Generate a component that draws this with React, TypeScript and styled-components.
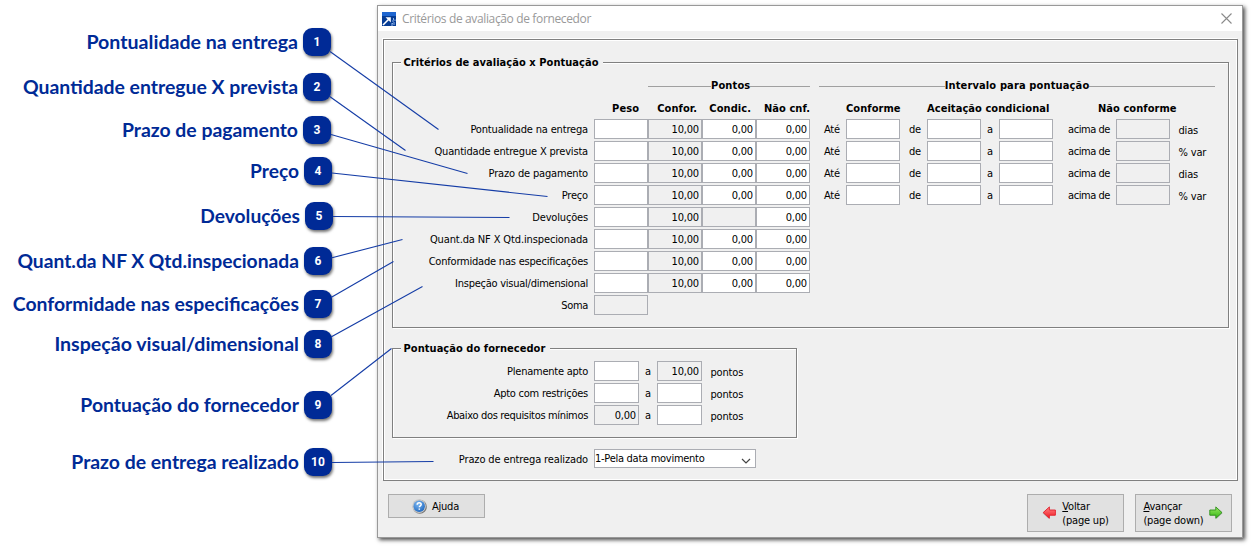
import React from 'react';
import styled, { createGlobalStyle } from 'styled-components';

const GlobalStyle = createGlobalStyle`
  * { box-sizing: border-box; }
  body { margin: 0; background: #fff; }
`;

const Page = styled.main`
  position: relative;
  display: flex;
  align-items: flex-start;
  width: 1256px;
  height: 549px;
  overflow: hidden;
  font: 11px/14px 'DejaVu Sans Condensed', 'DejaVu Sans', sans-serif;
  letter-spacing: -0.17px;
  color: #000;
`;

const CalloutList = styled.ol`
  list-style: none;
  margin: 0;
  padding: 28px 0 0;
  width: 377px;
  flex: none;
`;

const Callout = styled.li<{ $after: number; $inset: number }>`
  display: flex;
  justify-content: flex-end;
  align-items: center;
  gap: 5px;
  height: 28px;
  margin-bottom: ${(p) => p.$after}px;
  padding-right: ${(p) => p.$inset}px;
  white-space: nowrap;
`;

const CalloutText = styled.span<{ $size?: number }>`
  font: 700 ${(p) => p.$size ?? 19.4}px/28px Lato, sans-serif;
  letter-spacing: 0;
  color: #002a96;
`;

const Badge = styled.span`
  display: flex;
  align-items: center;
  justify-content: center;
  width: 28px;
  height: 28px;
  border-radius: 9px;
  background: #002a96;
  box-shadow: 1px 2px 3px rgba(0, 0, 0, 0.55);
  color: #fff;
  font: 700 12px/28px Roboto, sans-serif;
  letter-spacing: 0;
`;

const Leaders = styled.svg`
  position: absolute;
  inset: 0;
  pointer-events: none;
`;

const Window = styled.section`
  display: flex;
  flex-direction: column;
  flex: none;
  width: 866px;
  height: 533px;
  margin-top: 5px;
  border: 1px solid #999;
  background: #f0f0f0;
  box-shadow: 2px 2px 4px rgba(0, 0, 0, 0.7);
`;

const TitleBar = styled.header`
  display: flex;
  align-items: center;
  gap: 6px;
  height: 25px;
  padding: 0 10px 0 4px;
  background: #fff;
`;

const Title = styled.h1`
  flex: 1;
  margin: 0;
  font: 400 12px/24px 'Open Sans', sans-serif;
  letter-spacing: -0.36px;
  color: #999;
`;

const Panel = styled.div`
  width: 855px;
  height: 442px;
  margin: 8px 0 0 5px;
  padding: 22px 0 0 8px;
  border: 1px solid #808080;
  box-shadow: inset 1px 1px 0 #fff, inset -1px -1px 0 #fff, -1px -1px 0 #fff;
`;

const GroupBox = styled.section<{ $w: number; $h: number; $top: number; $after?: number }>`
  position: relative;
  display: flex;
  width: ${(p) => p.$w}px;
  height: ${(p) => p.$h}px;
  margin-bottom: ${(p) => p.$after ?? 0}px;
  padding-top: ${(p) => p.$top}px;
  border: 1px solid #808080;
  box-shadow: inset 1px 1px 0 #fff, 1px 1px 0 #fff;
`;

const Legend = styled.h2<{ $w: number }>`
  position: absolute;
  top: -8px;
  left: 8px;
  width: ${(p) => p.$w}px;
  margin: 0;
  padding-left: 2.5px;
  background: #f0f0f0;
  font-size: 11px;
  font-weight: 700;
  line-height: 15px;
  letter-spacing: 0.05px;
  white-space: nowrap;
`;

const Column = styled.div<{ $gapLeft?: number }>`
  margin-left: ${(p) => p.$gapLeft ?? 0}px;
`;

const Rule = styled.div<{ $indent?: number; $lead?: number }>`
  display: flex;
  align-items: center;
  height: 14px;
  margin: 0 0 8px ${(p) => p.$indent ?? 0}px;
  font-weight: 700;
  line-height: 16px;
  letter-spacing: 0.14px;
  &::before, &::after {
    content: '';
    flex: 1;
    height: 1px;
    background: #a0a0a0;
  }
  &::before {
    flex: ${(p) => (p.$lead ? `0 0 ${p.$lead}px` : '1')};
  }
`;

const HeaderRow = styled.div<{ $cols: string }>`
  display: grid;
  grid-template-columns: ${(p) => p.$cols};
  height: 14px;
  margin-bottom: 4px;
  font-weight: 700;
  line-height: 16px;
  letter-spacing: 0.06px;
  white-space: nowrap;
`;

const HeaderCell = styled.span<{ $right?: number }>`
  text-align: ${(p) => (p.$right === undefined ? 'left' : 'right')};
  padding-right: ${(p) => p.$right ?? 0}px;
`;

const Row = styled.div<{ $cols: string }>`
  display: grid;
  grid-template-columns: ${(p) => p.$cols};
  align-items: center;
  height: 20px;
  margin-bottom: 2px;
`;

const Label = styled.span<{ $track?: number }>`
  padding: 2px 6px 0 0;
  text-align: right;
  white-space: nowrap;
  letter-spacing: ${(p) => p.$track ?? -0.17}px;
`;

const Unit = styled.span`
  padding: 4px 0 0 8.5px;
  white-space: nowrap;
`;

const Field = styled.span<{ $off?: boolean }>`
  height: 20px;
  padding-right: 2px;
  border: 1px solid #abadb3;
  background: ${(p) => (p.$off ? '#f0f0f0' : '#fff')};
  line-height: 20px;
  text-align: right;
`;

const SelectRow = styled.div`
  display: grid;
  grid-template-columns: 202px 162px;
  align-items: center;
  height: 19px;
  margin-top: 11px;
`;

const Select = styled.div`
  display: flex;
  justify-content: space-between;
  align-items: center;
  height: 19px;
  padding: 0 4px 0 0;
  border: 1px solid #abadb3;
  background: #fff;
  line-height: 17px;
  letter-spacing: -0.27px;
`;

const Chevron = styled.svg`
  margin-top: 5px;
`;

const Footer = styled.footer`
  display: flex;
  align-items: flex-start;
  gap: 11px;
  padding: 13px 10px 0;
`;

const Button = styled.button<{ $tall?: boolean; $push?: boolean }>`
  display: flex;
  align-items: center;
  justify-content: center;
  gap: 5px;
  width: 97px;
  height: ${(p) => (p.$tall ? 38 : 24)}px;
  margin-right: ${(p) => (p.$push ? 'auto' : '0')};
  padding: 0 ${(p) => (p.$push ? 2 : 0)}px 0 0;
  border: 1px solid #adadad;
  border-radius: 0;
  background: #e1e1e1;
  color: #000;
  font: inherit;
  letter-spacing: -0.2px;
  text-align: left;
  white-space: nowrap;
  u { text-underline-offset: 1px; }
`;

const ButtonText = styled.span`
  padding-top: 2px;
`;

const callouts = [
  { text: 'Pontualidade na entrega', after: 17, inset: 46, size: 19.6 },
  { text: 'Quantidade entregue X prevista', after: 15, inset: 46 },
  { text: 'Prazo de pagamento', after: 13, inset: 46 },
  { text: 'Preço', after: 17, inset: 45, size: 19.2 },
  { text: 'Devoluções', after: 17, inset: 44, size: 19.2 },
  { text: 'Quant.da NF X Qtd.inspecionada', after: 15, inset: 45, size: 19.25 },
  { text: 'Conformidade nas especificações', after: 12, inset: 45 },
  { text: 'Inspeção visual/dimensional', after: 33, inset: 45, size: 19.6 },
  { text: 'Pontuação do fornecedor', after: 29, inset: 45 },
  { text: 'Prazo de entrega realizado', after: 0, inset: 45 },
];

const leaders = [
  [330, 51.5, 438.5, 129.5],
  [329, 96, 405.5, 150.5],
  [331, 134.5, 467.5, 173.5],
  [332, 173, 547.5, 196.5],
  [333, 216.5, 509.5, 217.5],
  [331, 258, 402.5, 239.5],
  [331, 297.5, 393.5, 261.5],
  [331, 337, 422.5, 286.5],
  [331, 395.5, 391.5, 348.5],
  [332, 462.5, 433.5, 461.5],
];

const criteria: { label: string; track?: number; condic?: string }[] = [
  { label: 'Pontualidade na entrega' },
  { label: 'Quantidade entregue X prevista' },
  { label: 'Prazo de pagamento' },
  { label: 'Preço' },
  { label: 'Devoluções', condic: '' },
  { label: 'Quant.da NF X Qtd.inspecionada', track: -0.12 },
  { label: 'Conformidade nas especificações', track: -0.21 },
  { label: 'Inspeção visual/dimensional', track: -0.25 },
];

const POINT_COLS = '201px repeat(4, 54px)';
const RANGE_COLS = '27px 54px 27px 54px 18px 54px 63px 54px 45px';
const SCORE_COLS = '201px 45px 18px 45px 60px';

const AppIcon = () => (
  <svg width="14" height="14" viewBox="0 0 14 14">
    <rect width="14" height="14" fill="#073c94" />
    <rect width="14" height="4" fill="#1f66d0" />
    <path d="M1 13 7.5 6.5" stroke="#fff" strokeWidth="1.6" />
    <path d="M3.5 5.2h5.3v5.3z" fill="#fff" />
    <path d="M11.5 6v2M10 9h2M12 10v3M9.5 11.5h1.5M9 13h2M13 7.5v1.5" stroke="#8fb4ea" strokeWidth="1" />
  </svg>
);

const CloseIcon = () => (
  <svg width="11" height="11" viewBox="0 0 11 11">
    <path d="M.5.5l10 10M10.5.5l-10 10" stroke="#8a8a8a" strokeWidth="1.1" />
  </svg>
);

const HelpIcon = () => (
  <svg width="15" height="15" viewBox="0 0 15 15">
    <defs>
      <radialGradient id="help" cx="40%" cy="30%" r="75%">
        <stop offset="0" stopColor="#7fb9f2" />
        <stop offset="1" stopColor="#1f68c0" />
      </radialGradient>
    </defs>
    <circle cx="7.8" cy="7.8" r="7" fill="#777" />
    <circle cx="7.1" cy="7.1" r="6.8" fill="#c8c8c8" />
    <circle cx="7.2" cy="7.2" r="5.7" fill="url(#help)" />
    <path d="M5.2 5.8c0-1.3.8-2 2-2s2 .7 2 1.8c0 1.3-1.9 1.3-1.9 2.7M7.3 9.4v1.4" fill="none" stroke="#fff" strokeWidth="1.5" />
  </svg>
);

const ArrowIcon = ({ back }: { back?: boolean }) => (
  <svg width="15" height="14" viewBox="0 0 15 14">
    <defs>
      <linearGradient id={back ? 'red' : 'green'} x2="0" y2="1">
        <stop offset="0" stopColor={back ? '#ff8585' : '#9bea62'} />
        <stop offset="1" stopColor={back ? '#f01822' : '#31b512'} />
      </linearGradient>
    </defs>
    <g transform={back ? 'translate(14.2 0) scale(-1 1)' : undefined}>
      <path d="M1.4 4.6h6V1.3l6.3 5.8-6.3 5.8V9.6h-6z" fill="#777" opacity=".45" />
      <path
        d="M.8 4h6V.9l6.2 5.7-6.2 5.7V9.2h-6z"
        fill={back ? 'url(#red)' : 'url(#green)'}
        stroke={back ? '#e3202c' : '#2f8f1c'}
        strokeWidth=".9"
      />
    </g>
  </svg>
);

export default function App() {
  return (
    <Page>
      <GlobalStyle />
      <CalloutList>
        {callouts.map((c, i) => (
          <Callout key={c.text} $after={c.after} $inset={c.inset}>
            <CalloutText $size={c.size}>{c.text}</CalloutText>
            <Badge>{i + 1}</Badge>
          </Callout>
        ))}
      </CalloutList>

      <Window>
        <TitleBar>
          <AppIcon />
          <Title>Critérios de avaliação de fornecedor</Title>
          <CloseIcon />
        </TitleBar>

        <Panel>
          <GroupBox $w={837} $h={266} $top={16} $after={20}>
            <Legend $w={202}>Critérios de avaliação x Pontuação</Legend>
            <Column>
              <Rule $indent={255} $lead={63}>Pontos</Rule>
              <HeaderRow $cols={POINT_COLS}>
                <span />
                <HeaderCell $right={9}>Peso</HeaderCell>
                <HeaderCell $right={5}>Confor.</HeaderCell>
                <HeaderCell $right={5}>Condic.</HeaderCell>
                <HeaderCell $right={0}>Não cnf.</HeaderCell>
              </HeaderRow>
              {criteria.map((c) => (
                <Row key={c.label} $cols={POINT_COLS}>
                  <Label $track={c.track}>{c.label}</Label>
                  <Field />
                  <Field $off>10,00</Field>
                  <Field $off={c.condic === ''}>{c.condic ?? '0,00'}</Field>
                  <Field>0,00</Field>
                </Row>
              ))}
              <Row $cols={POINT_COLS}>
                <Label $track={-0.35}>Soma</Label>
                <Field $off />
              </Row>
            </Column>

            <Column $gapLeft={9}>
              <Rule>Intervalo para pontuação</Rule>
              <HeaderRow $cols="27px 81px 171px 117px">
                <span />
                <HeaderCell>Conforme</HeaderCell>
                <HeaderCell>Aceitação condicional</HeaderCell>
                <HeaderCell>Não conforme</HeaderCell>
              </HeaderRow>
              {['dias', '% var', 'dias', '% var'].map((unit, i) => (
                <Row key={i} $cols={RANGE_COLS}>
                  <Label>Até</Label>
                  <Field />
                  <Label>de</Label>
                  <Field />
                  <Label>a</Label>
                  <Field />
                  <Label $track={-0.45}>acima de</Label>
                  <Field $off />
                  <Unit>{unit}</Unit>
                </Row>
              ))}
            </Column>
          </GroupBox>

          <GroupBox $w={405} $h={90} $top={12}>
            <Legend $w={149}>Pontuação do fornecedor</Legend>
            <Column>
              <Row $cols={SCORE_COLS}>
                <Label $track={-0.24}>Plenamente apto</Label>
                <Field />
                <Label $track={0}>a</Label>
                <Field $off>10,00</Field>
                <Unit>pontos</Unit>
              </Row>
              <Row $cols={SCORE_COLS}>
                <Label $track={-0.24}>Apto com restrições</Label>
                <Field />
                <Label $track={0}>a</Label>
                <Field />
                <Unit>pontos</Unit>
              </Row>
              <Row $cols={SCORE_COLS}>
                <Label $track={-0.33}>Abaixo dos requisitos mínimos</Label>
                <Field $off>0,00</Field>
                <Label $track={0}>a</Label>
                <Field />
                <Unit>pontos</Unit>
              </Row>
            </Column>
          </GroupBox>

          <SelectRow>
            <Label $track={-0.13}>Prazo de entrega realizado</Label>
            <Select>
              1-Pela data movimento
              <Chevron width="10" height="6" viewBox="0 0 10 6">
                <path d="M1 1l4 4 4-4" fill="none" stroke="#444" strokeWidth="1.2" />
              </Chevron>
            </Select>
          </SelectRow>
        </Panel>

        <Footer>
          <Button $push>
            <HelpIcon />
            <ButtonText>A<u>j</u>uda</ButtonText>
          </Button>
          <Button $tall>
            <ArrowIcon back />
            <ButtonText><u>V</u>oltar<br />(page up)</ButtonText>
          </Button>
          <Button $tall>
            <ButtonText><u>A</u>vançar<br />(page down)</ButtonText>
            <ArrowIcon />
          </Button>
        </Footer>
      </Window>

      <Leaders width="1256" height="549" viewBox="0 0 1256 549">
        {leaders.map(([x1, y1, x2, y2]) => (
          <line key={y1} x1={x1} y1={y1} x2={x2} y2={y2} stroke="#143ca6" strokeWidth="1.1" />
        ))}
      </Leaders>
    </Page>
  );
}
